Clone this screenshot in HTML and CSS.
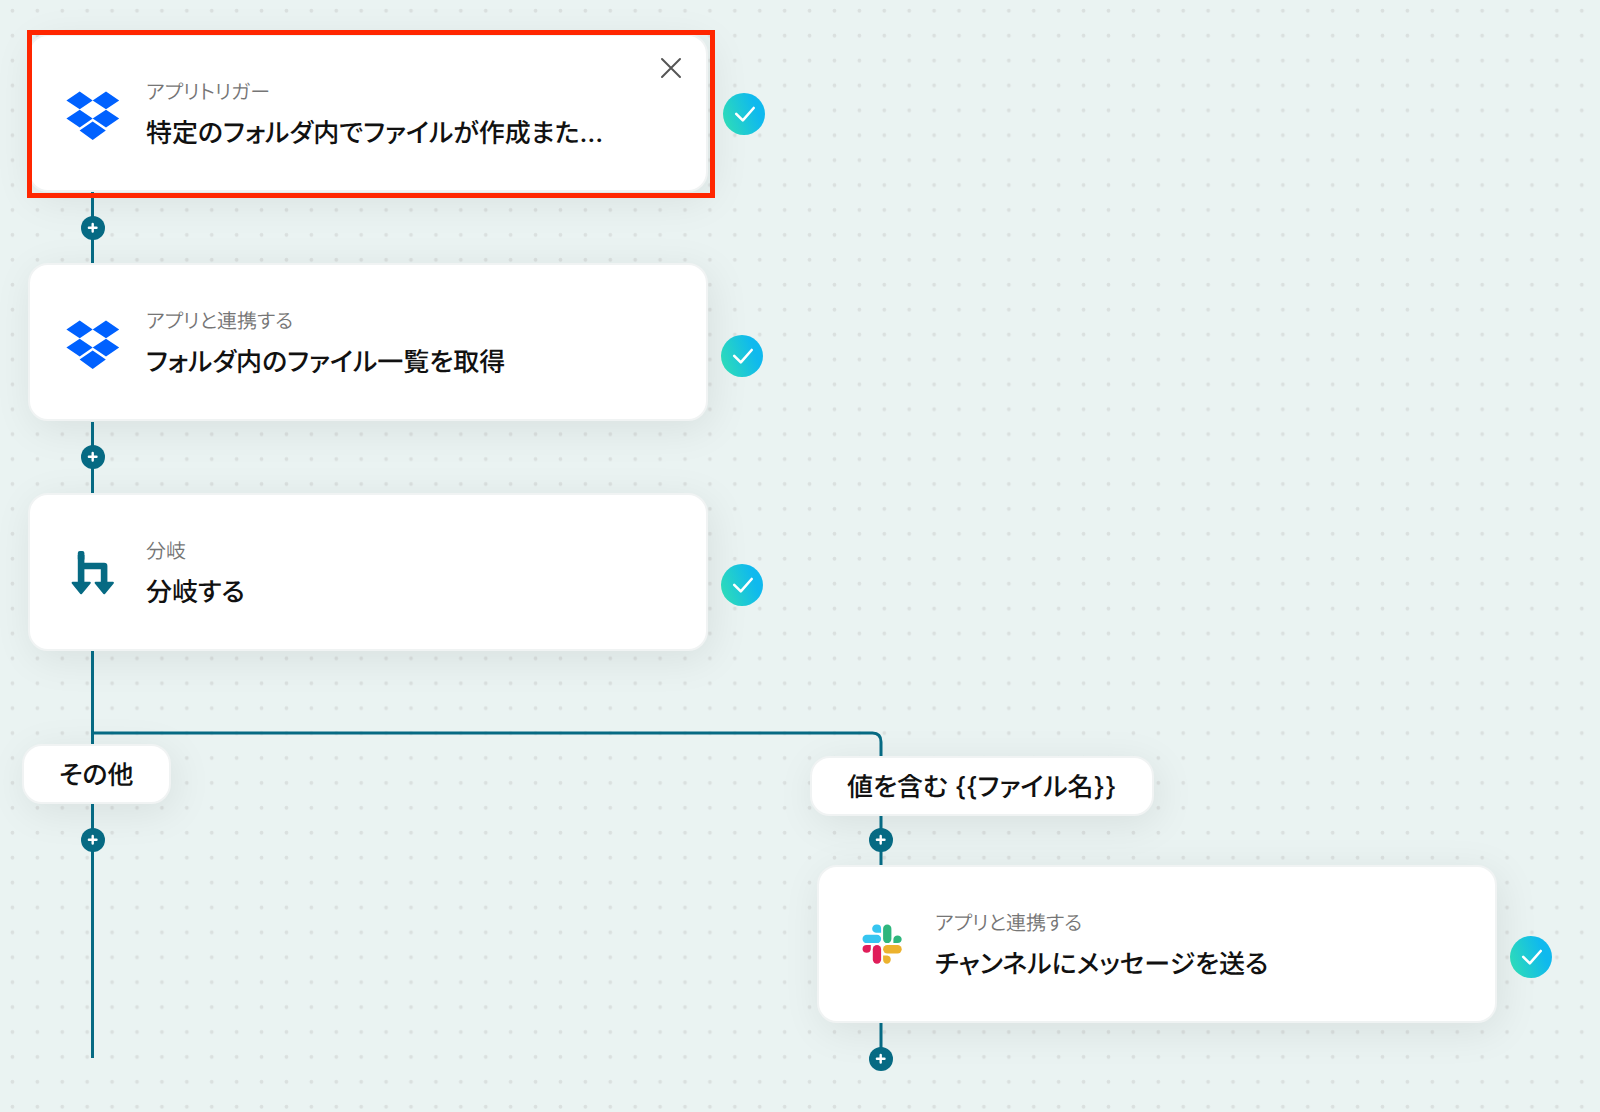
FILE: index.html
```html
<!DOCTYPE html>
<html lang="ja">
<head>
<meta charset="utf-8">
<meta name="viewport" content="width=device-width, initial-scale=1">
<title>フローボット</title>
<link rel="stylesheet" href="styles.css">
</head>
<body>
<svg class="symbols" aria-hidden="true">
  <symbol id="dropbox" viewBox="0 0 54 54">
    <path fill="#0061ff" d="M13.700 5.600 26.700 14.400 13.700 23.200.4 14.400zM40 5.600 53.200 14.400 40 23.200 26.700 14.400zM13.700 23.800 26.700 32.600 13.700 41.400.4 32.600zM40 23.800 53.200 32.600 40 41.400 26.700 32.600zM26.700 35.600 39.800 44.600 26.700 54 13.600 44.600z"/>
  </symbol>
  <symbol id="branch" viewBox="0 0 54 54">
    <path fill="none" stroke="#066a83" stroke-width="6.600" stroke-linejoin="round" d="M15.100 10V38M15.100 21H38.100V38"/>
    <rect x="11.800" y="6" width="6.600" height="10" rx="2" fill="#066a83"/>
    <path fill="#066a83" stroke="#066a83" stroke-width="2" stroke-linejoin="round" d="M6.600 37.800H23.800L15.100 48.300zM29.600 37.800H46.900L38.200 48.300z"/>
  </symbol>
  <symbol id="slack" viewBox="0 0 54 54">
    <g fill="#36c5f0"><path d="M22 7.500a4.200 4.200 0 1 0 0 8.300h4.100v-4.200A4.100 4.100 0 0 0 22 7.500z"/><rect x="7.500" y="17.800" width="18.600" height="8.300" rx="4.150"/></g>
    <g fill="#2eb67d"><rect x="28.100" y="7.500" width="8.300" height="18.600" rx="4.150"/><path d="M46.700 22a4.200 4.200 0 0 0-8.300 0v4.100h4.100a4.200 4.200 0 0 0 4.200-4.100z"/></g>
    <g fill="#ecb22e"><rect x="28.100" y="28.100" width="18.600" height="8.300" rx="4.150"/><path d="M32.200 46.700a4.200 4.200 0 0 0 0-8.300h-4.100v4.100a4.200 4.200 0 0 0 4.100 4.200z"/></g>
    <g fill="#e01e5a"><rect x="17.800" y="28.100" width="8.300" height="18.600" rx="4.150"/><path d="M7.500 32.200a4.200 4.200 0 0 0 8.300 0v-4.100h-4.100a4.200 4.200 0 0 0-4.200 4.100z"/></g>
  </symbol>
  <symbol id="plus" viewBox="0 0 24 24">
    <path fill="none" stroke="#fff" stroke-width="2.400" stroke-linecap="round" d="M11.700 7.900v7.600M7.900 11.700h7.600"/>
  </symbol>
  <symbol id="check" viewBox="0 0 42 42">
    <path fill="none" stroke="#fff" stroke-width="2.600" stroke-linecap="round" stroke-linejoin="round" d="M13.200 20.800 19.800 27.400 30.700 15"/>
  </symbol>
</svg>

<main class="canvas">
  <svg class="backdrop" aria-hidden="true">
    <defs>
      <pattern id="dots" width="24.910" height="24.910" patternUnits="userSpaceOnUse">
        <circle cx="12.450" cy="10.700" r="1.900" fill="#dae0df"/>
      </pattern>
    </defs>
    <rect width="100%" height="100%" fill="url(#dots)"/>
  </svg>

  <section class="node node-trigger">
    <svg class="node-icon" aria-hidden="true"><use href="#dropbox"/></svg>
    <div class="node-text">
      <p class="node-kind">アプリトリガー</p>
      <h2 class="node-title">特定のフォルダ内でファイルが作成また…</h2>
    </div>
    <button class="node-close" type="button" aria-label="閉じる">
      <svg viewBox="0 0 24 24" aria-hidden="true"><path d="M3 3 21 21M21 3 3 21"/></svg>
    </button>
  </section>
  <section class="node node-list">
    <svg class="node-icon" aria-hidden="true"><use href="#dropbox"/></svg>
    <div class="node-text">
      <p class="node-kind">アプリと連携する</p>
      <h2 class="node-title">フォルダ内のファイル一覧を取得</h2>
    </div>
  </section>
  <section class="node node-branch">
    <svg class="node-icon" aria-hidden="true"><use href="#branch"/></svg>
    <div class="node-text">
      <p class="node-kind">分岐</p>
      <h2 class="node-title">分岐する</h2>
    </div>
  </section>
  <section class="node node-message">
    <svg class="node-icon" aria-hidden="true"><use href="#slack"/></svg>
    <div class="node-text">
      <p class="node-kind">アプリと連携する</p>
      <h2 class="node-title">チャンネルにメッセージを送る</h2>
    </div>
  </section>

  <button class="condition condition-other" type="button">その他</button>
  <button class="condition condition-match" type="button">値を含む {{ファイル名}}</button>

  <svg class="edges" aria-hidden="true">
    <path d="M92.500 192V263M92.500 422V493M92.500 651V744M92.500 804V1058M92.500 733H872.500Q881 733 881 742V756M881 816V865M881 1023V1058"/>
  </svg>

  <button class="add add-1" type="button" aria-label="追加"><svg aria-hidden="true"><use href="#plus"/></svg></button>
  <button class="add add-2" type="button" aria-label="追加"><svg aria-hidden="true"><use href="#plus"/></svg></button>
  <button class="add add-3" type="button" aria-label="追加"><svg aria-hidden="true"><use href="#plus"/></svg></button>
  <button class="add add-4" type="button" aria-label="追加"><svg aria-hidden="true"><use href="#plus"/></svg></button>
  <button class="add add-5" type="button" aria-label="追加"><svg aria-hidden="true"><use href="#plus"/></svg></button>

  <span class="status status-1"><svg aria-hidden="true"><use href="#check"/></svg></span>
  <span class="status status-2"><svg aria-hidden="true"><use href="#check"/></svg></span>
  <span class="status status-3"><svg aria-hidden="true"><use href="#check"/></svg></span>
  <span class="status status-4"><svg aria-hidden="true"><use href="#check"/></svg></span>

  <div class="highlight"></div>
</main>
</body>
</html>
```
FILE: styles.css
```css
* {
  box-sizing: border-box;
}

body {
  margin: 0;
  background: #eaf3f2;
  color: #111;
  font-family: Inter, "Noto Sans CJK JP", sans-serif;
  font-feature-settings: "palt";
  text-rendering: geometricPrecision;
}

button {
  padding: 0;
  border: 0;
  color: inherit;
  font: inherit;
  font-feature-settings: inherit;
  text-rendering: inherit;
  cursor: pointer;
}

.symbols {
  display: none;
}

/* Free canvas: nodes, labels and connectors are placed by coordinate. */
.canvas {
  position: relative;
  min-width: 1560px;
  min-height: max(100vh, 1100px);
  overflow: hidden;
}

.backdrop,
.edges {
  position: absolute;
  inset: 0;
  width: 100%;
  height: 100%;
  pointer-events: none;
}

.edges path {
  fill: none;
  stroke: #066a83;
  stroke-width: 3;
}

.node,
.condition {
  position: absolute;
  border: 2px solid #f0f3f3;
  border-radius: 20px;
  background: #fff;
  box-shadow: 4px 8px 40px rgba(0, 0, 0, 0.08);
}

.node {
  display: flex;
  align-items: center;
  gap: 26px;
  width: 680px;
  min-height: 158px;
  padding: 0 36px;
}

.node-trigger { left: 28px; top: 34px; }
.node-list { left: 28px; top: 263px; }
.node-branch { left: 28px; top: 493px; }
.node-message { left: 817px; top: 865px; }

.node-icon {
  flex: none;
  width: 54px;
  height: 54px;
}

.node-text {
  display: grid;
  gap: 6px;
}

.node-kind,
.node-title {
  margin: 0;
  white-space: nowrap;
}

.node-kind {
  color: #757575;
  font-size: 20px;
  font-weight: 350;
  line-height: 36px;
}

.node-title {
  font-size: 26px;
  font-weight: 500;
  line-height: 36px;
}

.node-close {
  position: absolute;
  top: 20px;
  right: 23px;
  width: 24px;
  height: 24px;
  background: none;
}

.node-close svg {
  display: block;
}

.node-close path {
  fill: none;
  stroke: #555;
  stroke-width: 2;
  stroke-linecap: round;
}

.condition {
  height: 60px;
  padding: 4px 35px 0;
  font-size: 26px;
  font-weight: 500;
  line-height: 36px;
  white-space: nowrap;
}

.condition-other { left: 22px; top: 744px; }
.condition-match { left: 810px; top: 756px; }

.add {
  position: absolute;
  width: 24px;
  height: 24px;
  border-radius: 50%;
  background: #066a83;
}

.add svg,
.status svg {
  display: block;
  width: 100%;
  height: 100%;
}

.add-1 { left: 81px; top: 216px; }
.add-2 { left: 81px; top: 445px; }
.add-3 { left: 81px; top: 828px; }
.add-4 { left: 869px; top: 828px; }
.add-5 { left: 869px; top: 1047px; }

.status {
  position: absolute;
  width: 42px;
  height: 42px;
  border-radius: 50%;
  background: linear-gradient(70deg, #2edcb8 8%, #0fb9ee 75%);
}

.status-1 { left: 723px; top: 93px; }
.status-2 { left: 721px; top: 335px; }
.status-3 { left: 721px; top: 564px; }
.status-4 { left: 1510px; top: 936px; }

.highlight {
  position: absolute;
  left: 27px;
  top: 30px;
  width: 688px;
  height: 168px;
  border: 5px solid #ff2600;
  pointer-events: none;
}
```
